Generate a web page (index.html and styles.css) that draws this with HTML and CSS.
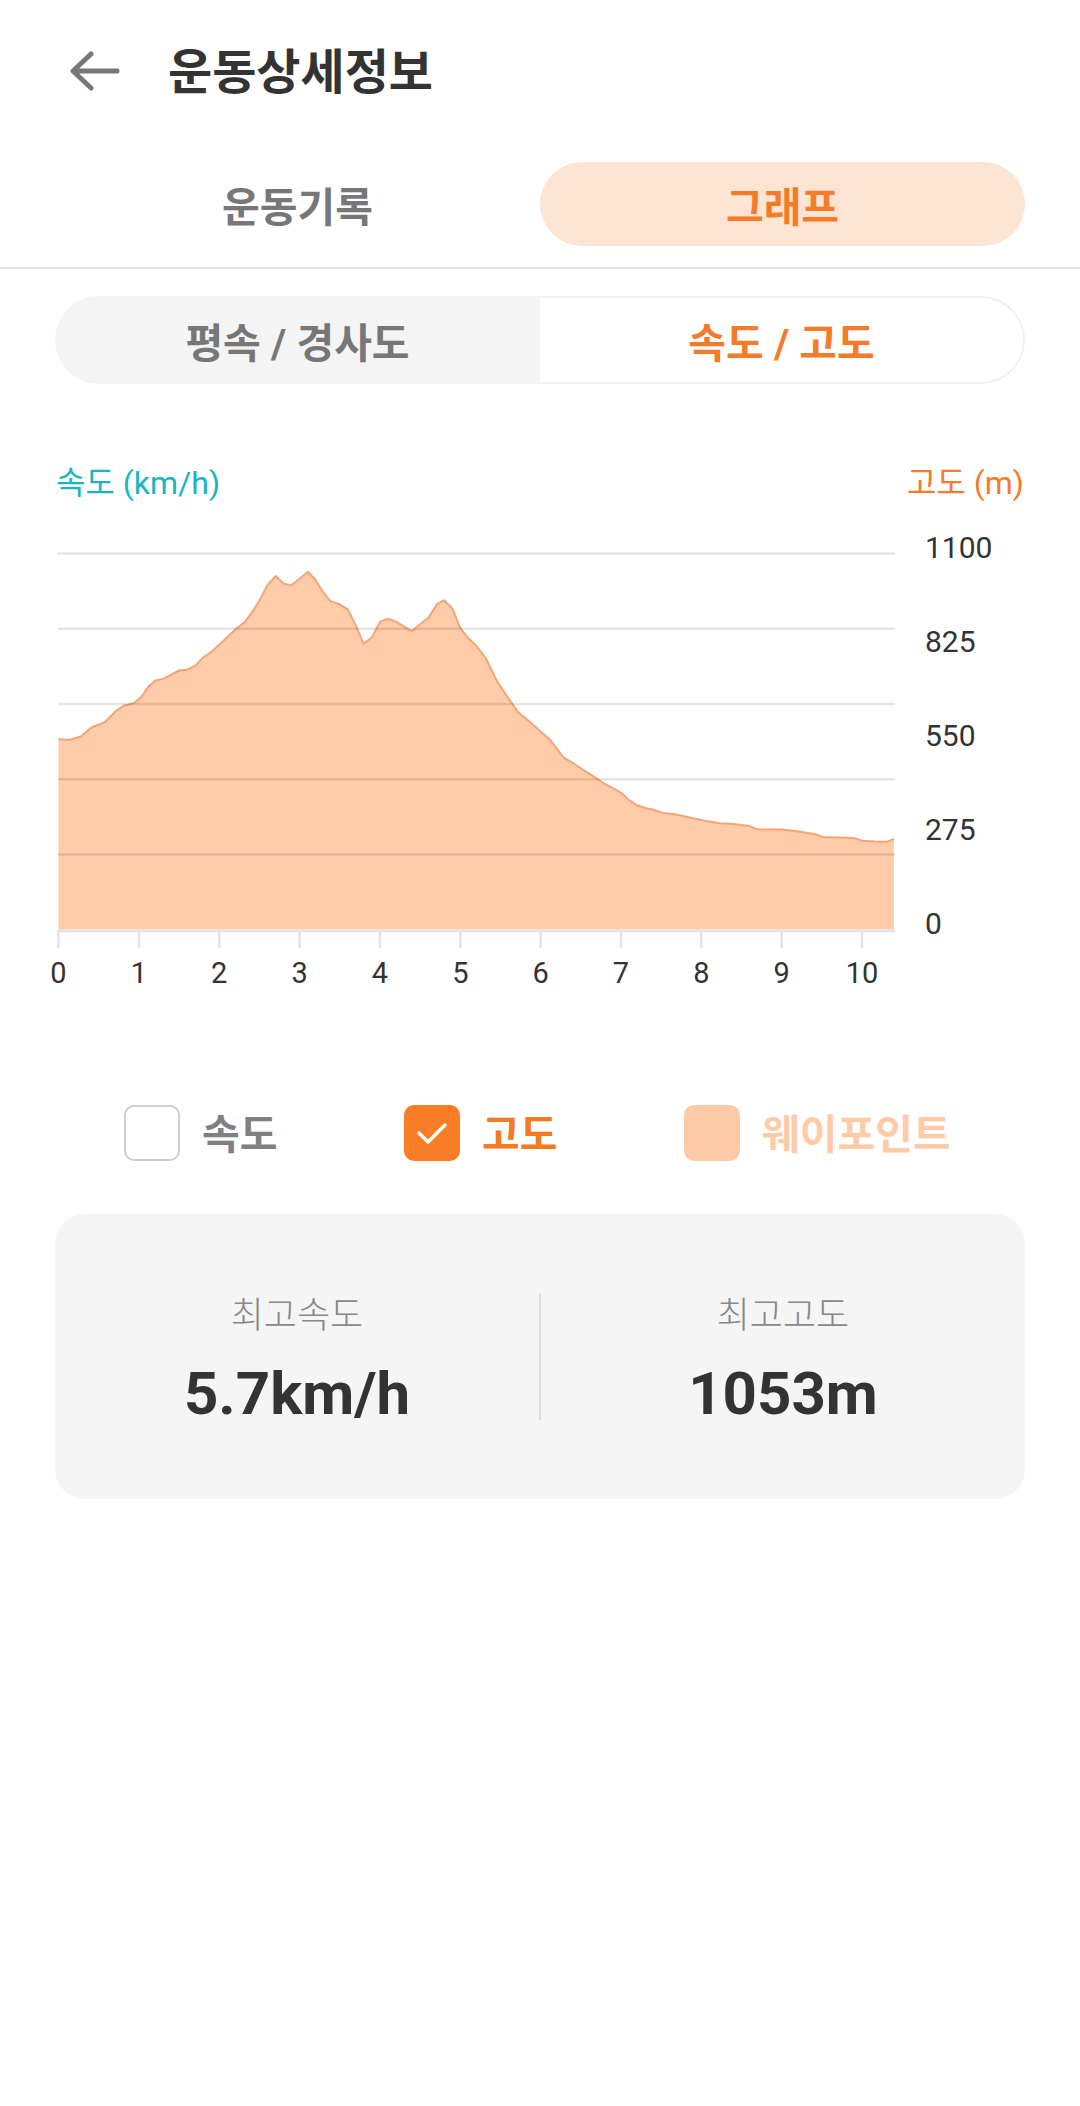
FILE: index.html
```html
<!DOCTYPE html>
<html lang="ko">
<head>
  <meta charset="UTF-8" />
  <meta name="viewport" content="width=device-width, initial-scale=1.0"/>
  <title>운동상세정보</title>
  <link rel="stylesheet" href="styles.css">
</head>
<body>
  <div class="topbar">
    <svg class="back-icon" viewBox="0 0 50 40">
      <path d="M47 20 H4 M21 3 L3 20 L21 37" />
    </svg>
    <h1 class="title">운동상세정보</h1>
  </div>

  <div class="tabs-wrap">
    <div class="tabs">
      <div class="tab">운동기록</div>
      <div class="tab tab-active">그래프</div>
    </div>
  </div>

  <div class="segment">
    <div class="seg-item">평속 / 경사도</div>
    <div class="seg-item seg-active">속도 / 고도</div>
  </div>

  <div class="chart-head">
    <span class="axis-speed">속도 (km/h)</span>
    <span class="axis-alt">고도 (m)</span>
  </div>

  <!-- viewBox uses page coordinates so points match the screen -->
  <svg class="chart" width="1080" height="500" viewBox="0 503 1080 500">
    <polygon class="area" points="58.5,929.6 58.5,738.9 68.9,740 81.3,736.3 90.9,727.8 104.7,722.3 115.7,711.2 124,705.6 134.3,703 141.2,697.1 148.1,687.1 155,680.8 163.9,678.6 179.1,670.5 187.3,669.7 194.9,666 203.2,657.5 212.1,651.2 220.4,643.8 229.3,635.3 236.2,628.7 244.5,622.4 251.4,613.1 260.3,599.4 267.2,585.4 275.5,576.1 283.7,583.5 291.3,585.4 299.6,578.7 307.9,571.7 315.4,579.8 322.3,590.9 330.6,601.3 338.8,603.9 347.8,609.4 356.1,626.1 363.6,643.8 371.9,637.2 380.2,621.6 387.7,618.7 396,621.6 411.8,631.3 420.1,624.2 428.4,617.9 437.3,603.9 444.2,600.2 452.5,608.7 460.1,627.9 468.3,638.3 475.2,644.6 485.5,657.5 497.2,681.6 509.6,700.1 517.9,711.9 530.3,722.3 540.6,731.5 551,740.8 563.4,757.4 573,763 584,770.4 595.7,777.8 604.7,784 613,788.1 621.9,793.3 628.1,799.2 637.1,805.5 647.4,808.5 654.3,810 662.5,812.9 673.6,814 688.7,817.3 705.9,821 719.7,823.3 733.5,824 749.3,825.9 757.6,829.6 781.7,829.6 798.9,831.4 816.1,834.4 823,837 854,838.1 862.3,840.7 874.7,841.4 887,841.8 893.9,838.8 893.9,929.6" />
    <polyline class="line" points="58.5,738.9 68.9,740 81.3,736.3 90.9,727.8 104.7,722.3 115.7,711.2 124,705.6 134.3,703 141.2,697.1 148.1,687.1 155,680.8 163.9,678.6 179.1,670.5 187.3,669.7 194.9,666 203.2,657.5 212.1,651.2 220.4,643.8 229.3,635.3 236.2,628.7 244.5,622.4 251.4,613.1 260.3,599.4 267.2,585.4 275.5,576.1 283.7,583.5 291.3,585.4 299.6,578.7 307.9,571.7 315.4,579.8 322.3,590.9 330.6,601.3 338.8,603.9 347.8,609.4 356.1,626.1 363.6,643.8 371.9,637.2 380.2,621.6 387.7,618.7 396,621.6 411.8,631.3 420.1,624.2 428.4,617.9 437.3,603.9 444.2,600.2 452.5,608.7 460.1,627.9 468.3,638.3 475.2,644.6 485.5,657.5 497.2,681.6 509.6,700.1 517.9,711.9 530.3,722.3 540.6,731.5 551,740.8 563.4,757.4 573,763 584,770.4 595.7,777.8 604.7,784 613,788.1 621.9,793.3 628.1,799.2 637.1,805.5 647.4,808.5 654.3,810 662.5,812.9 673.6,814 688.7,817.3 705.9,821 719.7,823.3 733.5,824 749.3,825.9 757.6,829.6 781.7,829.6 798.9,831.4 816.1,834.4 823,837 854,838.1 862.3,840.7 874.7,841.4 887,841.8 893.9,838.8" />

    <g class="grid">
      <line x1="58" y1="553.4" x2="895" y2="553.4" />
      <line x1="58" y1="628.7" x2="895" y2="628.7" />
      <line x1="58" y1="703.9" x2="895" y2="703.9" />
      <line x1="58" y1="779.2" x2="895" y2="779.2" />
      <line x1="58" y1="854.4" x2="895" y2="854.4" />
    </g>

    <g class="axis">
      <line x1="57" y1="931" x2="895" y2="931" />
      <line x1="58.5" y1="931" x2="58.5" y2="948" />
      <line x1="138.9" y1="931" x2="138.9" y2="948" />
      <line x1="219.2" y1="931" x2="219.2" y2="948" />
      <line x1="299.6" y1="931" x2="299.6" y2="948" />
      <line x1="379.9" y1="931" x2="379.9" y2="948" />
      <line x1="460.3" y1="931" x2="460.3" y2="948" />
      <line x1="540.6" y1="931" x2="540.6" y2="948" />
      <line x1="621" y1="931" x2="621" y2="948" />
      <line x1="701.3" y1="931" x2="701.3" y2="948" />
      <line x1="781.7" y1="931" x2="781.7" y2="948" />
      <line x1="862" y1="931" x2="862" y2="948" />
    </g>

    <g class="x-labels">
      <text x="58.5" y="983">0</text>
      <text x="138.9" y="983">1</text>
      <text x="219.2" y="983">2</text>
      <text x="299.6" y="983">3</text>
      <text x="379.9" y="983">4</text>
      <text x="460.3" y="983">5</text>
      <text x="540.6" y="983">6</text>
      <text x="621" y="983">7</text>
      <text x="701.3" y="983">8</text>
      <text x="781.7" y="983">9</text>
      <text x="862" y="983">10</text>
    </g>

    <g class="y-labels">
      <text x="925" y="558">1100</text>
      <text x="925" y="652">825</text>
      <text x="925" y="746">550</text>
      <text x="925" y="840">275</text>
      <text x="925" y="934">0</text>
    </g>
  </svg>

  <div class="legend">
    <div class="legend-item">
      <span class="check"></span>
      <span class="legend-text">속도</span>
    </div>
    <div class="legend-item legend-alt">
      <span class="check">
        <svg viewBox="0 0 56 56"><path d="M15 28 L24 37 L41 20" /></svg>
      </span>
      <span class="legend-text">고도</span>
    </div>
    <div class="legend-item legend-way">
      <span class="check"></span>
      <span class="legend-text">웨이포인트</span>
    </div>
  </div>

  <div class="stats">
    <div class="stat">
      <div class="stat-label">최고속도</div>
      <div class="stat-value">5.7km/h</div>
    </div>
    <div class="stat-divider"></div>
    <div class="stat">
      <div class="stat-label">최고고도</div>
      <div class="stat-value">1053m</div>
    </div>
  </div>
</body>
</html>
```

FILE: styles.css
```css
body {
  margin: 0;
  padding: 0;
  font-family: Roboto, "Noto Sans CJK KR", sans-serif;
  background: #fff;
  color: #333;
}

.topbar {
  height: 145px;
  display: flex;
  align-items: center;
  padding-left: 70px;
}

.back-icon {
  width: 50px;
  height: 40px;
  margin-right: 48px;
  margin-top: -4px;
}

.back-icon path {
  fill: none;
  stroke: #777;
  stroke-width: 5;
  stroke-linecap: round;
  stroke-linejoin: round;
}

.title {
  margin: 0;
  font-size: 48px;
  font-weight: 700;
  line-height: 1;
  color: #333;
}

.tabs-wrap {
  padding: 17px 55px 21px;
  border-bottom: 2px solid #e3e3e3;
}

.tabs {
  display: grid;
  grid-template-columns: 1fr 1fr;
}

.tab {
  height: 84px;
  display: flex;
  align-items: center;
  justify-content: center;
  font-size: 41px;
  font-weight: 700;
  color: #777;
}

.tab-active {
  background: #fee4d2;
  color: #f47b2a;
  border-radius: 42px;
}

.segment {
  margin: 27px 55px 0;
  height: 88px;
  display: grid;
  grid-template-columns: 1fr 1fr;
  background: #f4f4f4;
  border-radius: 44px;
  overflow: hidden;
}

.seg-item {
  display: flex;
  align-items: center;
  justify-content: center;
  font-size: 41px;
  font-weight: 700;
  color: #777;
}

.seg-active {
  background: #fff;
  color: #f47b2a;
  border: 2px solid #f1f1f1;
  border-left: none;
  border-radius: 0 44px 44px 0;
}

.chart-head {
  margin-top: 79px;
  padding: 0 56px;
  display: flex;
  justify-content: space-between;
  font-size: 32px;
  line-height: 40px;
}

.axis-speed {
  color: #1bb5c0;
}

.axis-alt {
  color: #f47b2a;
}

.chart {
  display: block;
}

.chart .area {
  fill: #ffcba8;
}

.chart .line {
  fill: none;
  stroke: #f4a576;
  stroke-width: 2;
  stroke-linejoin: round;
}

.chart .grid line {
  stroke: rgba(0, 0, 0, 0.1);
  stroke-width: 2.5;
}

.chart .axis line {
  stroke: #e3e3e3;
  stroke-width: 2.5;
}

.chart .x-labels text {
  font-size: 29px;
  fill: #333;
  text-anchor: middle;
}

.chart .y-labels text {
  font-size: 30px;
  fill: #333;
}

.legend {
  margin-top: 102px;
  padding-left: 124px;
  display: grid;
  grid-template-columns: repeat(3, 280px);
}

.legend-item {
  display: flex;
  align-items: center;
  gap: 22px;
}

.check {
  width: 56px;
  height: 56px;
  box-sizing: border-box;
  border-radius: 10px;
  border: 2px solid #cfcfcf;
  background: #fff;
}

.check svg {
  display: block;
  width: 100%;
  height: 100%;
}

.check svg path {
  fill: none;
  stroke: #fff;
  stroke-width: 3.5;
  stroke-linecap: round;
  stroke-linejoin: round;
}

.legend-text {
  font-size: 41px;
  font-weight: 700;
  color: #808080;
  margin-top: -4px;
}

.legend-alt .check {
  border: none;
  background: #f97d26;
}

.legend-alt .legend-text {
  color: #f47b22;
}

.legend-way .check {
  border: none;
  background: #ffcba6;
}

.legend-way .legend-text {
  color: #ffcba6;
}

.stats {
  margin: 53px 55px 0;
  height: 285px;
  background: #f5f5f5;
  border-radius: 30px;
  display: grid;
  grid-template-columns: 1fr 2px 1fr;
  align-items: center;
}

.stat {
  display: flex;
  flex-direction: column;
  align-items: center;
}

.stat-label {
  font-size: 36px;
  font-weight: 300;
  line-height: 40px;
  color: #888;
  margin-top: 8px;
}

.stat-value {
  margin-top: 26px;
  font-size: 60px;
  font-weight: 700;
  line-height: 64px;
  color: #333;
}

.stat-divider {
  width: 2px;
  height: 126px;
  background: #dcdcdc;
}
```
